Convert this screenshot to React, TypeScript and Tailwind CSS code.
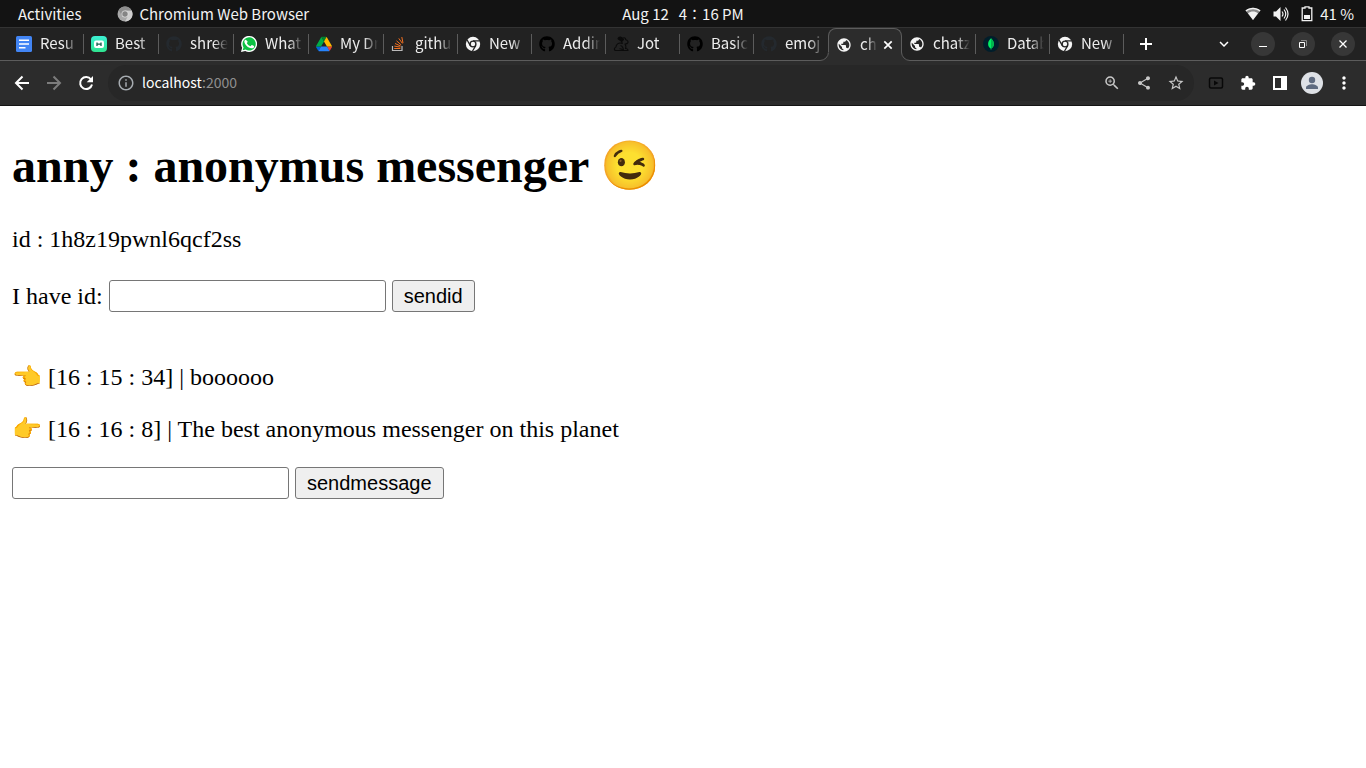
import type { ReactNode } from "react";
import { FaGithub } from "react-icons/fa";
import {
  MdExpandMore,
  MdExtension,
  MdInfoOutline,
  MdMoreVert,
  MdPublic,
  MdRefresh,
  MdShare,
  MdStarBorder,
  MdZoomIn,
} from "react-icons/md";

function DocsIcon() {
  return (
    <svg viewBox="0 0 16 16" className="size-4">
      <rect width="16" height="16" rx="1.5" fill="#4285f4" />
      <path d="M3 4.2h10M3 8h10M3 11.8h6.5" stroke="#fff" strokeWidth="1.6" />
    </svg>
  );
}

function CaptureIcon() {
  return (
    <svg viewBox="0 0 16 16" className="size-4">
      <defs>
        <linearGradient id="capture" x1="0" y1="0" x2="0" y2="1">
          <stop offset="0" stopColor="#3df0d4" />
          <stop offset="1" stopColor="#2fe38f" />
        </linearGradient>
      </defs>
      <rect width="16" height="16" rx="4" fill="url(#capture)" />
      <rect x="3" y="4.500" width="10" height="7.500" rx="2" fill="#fff" />
      <path d="M6 6.500v3.500M10 6.500v3.500M6 8.200h4" stroke="#155e4c" strokeWidth="1.300" />
    </svg>
  );
}

function WhatsAppIcon() {
  return (
    <svg viewBox="0 0 24 24" className="size-4">
      <path d="M0 24l1.7-6.2A12 12 0 1 1 6.3 22.4z" fill="#fff" />
      <path d="M2.5 21.5l1.3-4.4A9.9 9.9 0 1 1 7 20.3z" fill="#0cc143" />
      <path
        d="M8.8 6.6c-.3-.6-.6-.6-1-.6-1 .1-2 1.300-2 2.900 0 1.700 1.300 3.400 1.500 3.600.2.2 2.500 4 6.200 5.400 3 1.200 3.700.9 4.300.9.700-.1 2.100-.9 2.400-1.700.3-.8.3-1.600.2-1.700-.1-.2-.3-.3-.7-.5l-2.400-1.100c-.3-.1-.6-.2-.8.2l-1.100 1.400c-.2.200-.4.300-.8.100-.4-.2-1.500-.6-2.900-1.800-1.100-1-1.800-2.100-2-2.500-.2-.4 0-.6.2-.7.400-.4 1-1.200 1-1.500z"
        fill="#fff"
        transform="translate(-.8 -.3)"
      />
    </svg>
  );
}

function DriveIcon() {
  return (
    <svg viewBox="0 0 87.3 78" className="size-4">
      <path d="m6.600 66.850 3.850 6.650c.8 1.400 1.950 2.500 3.300 3.300L27.500 53H0c0 1.550.4 3.100 1.200 4.500z" fill="#0066da" />
      <path d="M43.650 25 29.900 1.200c-1.350.8-2.500 1.900-3.300 3.300l-25.400 44A9.060 9.060 0 0 0 0 53h27.500z" fill="#00ac47" />
      <path d="M73.550 76.800c1.350-.8 2.500-1.900 3.300-3.300l1.600-2.750L86.100 57.500c.8-1.400 1.200-2.950 1.200-4.500H59.800l5.850 11.500z" fill="#ea4335" />
      <path d="M43.650 25 57.400 1.200C56.050.4 54.500 0 52.900 0H34.400c-1.600 0-3.150.45-4.500 1.200z" fill="#00832d" />
      <path d="M59.800 53H27.500L13.750 76.800c1.350.8 2.900 1.200 4.500 1.200h50.800c1.600 0 3.150-.45 4.500-1.200z" fill="#2684fc" />
      <path d="m73.400 26.500-12.700-22c-.8-1.400-1.950-2.500-3.300-3.300L43.650 25l16.150 28h27.450c0-1.550-.4-3.100-1.200-4.500z" fill="#ffba00" />
    </svg>
  );
}

function StackOverflowIcon() {
  return (
    <svg viewBox="0 0 16 16" className="size-4" fill="none">
      <path d="M1.500 10v4.500h9.500V10" stroke="#bcbbbb" strokeWidth="1.200" />
      <path
        d="M3.200 12.500h6.200M3.300 10.100l6.100 1M4 7.500l5.700 2.500M5.500 4.800l4.700 4.100M7.800 2.400l3.600 5M10.800 1l1.200 6.100"
        stroke="#f4701f"
        strokeWidth="1"
      />
    </svg>
  );
}

function ChromeIcon() {
  return (
    <svg viewBox="0 0 16 16" className="size-4">
      <circle cx="8" cy="8" r="7.200" fill="#f5f5f5" />
      <circle cx="8" cy="8" r="3.600" fill="#222" />
      <path d="M8 4.900h6.800M5.300 9.600 2 3.800M10.700 9.600l-3.400 5.900" stroke="#222" strokeWidth="1.300" />
      <circle cx="8" cy="8" r="2.200" fill="#f5f5f5" />
    </svg>
  );
}

function RabbitIcon() {
  return (
    <svg viewBox="0 0 16 16" className="size-4" fill="none" stroke="#0b0b0b" strokeWidth="1.100" strokeLinejoin="round">
      <path d="M5 2.500C6 .5 8.500.5 10.500 3.500L8.500 5.500C7 3.800 5.500 3.500 5 2.500z" fill="#0b0b0b" />
      <path d="M10 2c1.500-.8 2.500 0 2.800 1.800 1.700.5 2.500 1.700 2.200 2.700-.5 1.300-1.500 1.500-3 1.500L13 10.500" />
      <path d="M9 5.500c-.3 1 0 1.500.3 2C6 6 3 8 2.800 11.500M2.800 11.500c-2 .3-2 3 .2 3h6.500c0-1.500-1.300-1.800-3-1.800M7.500 9.500c1.800.5 2.800 2 3 5H15c0-1.500-1-2-2.500-2l.5-2" />
    </svg>
  );
}

function GlobeIcon() {
  return <MdPublic className="size-4 text-[#f5f5f5]" />;
}

function MongoIcon() {
  return (
    <svg viewBox="0 0 16 16" className="size-4">
      <circle cx="8" cy="8" r="8" fill="#001e2b" />
      <path d="M8 2.300c2 2 2.900 3.700 2.900 5.700S9.800 11.500 8.300 12.500v1.200h-.6v-1.200C6.200 11.500 5.100 10 5.100 8S6 4.300 8 2.300z" fill="#00ed64" />
      <path d="M8 2.300c2 2 2.900 3.700 2.900 5.700S9.800 11.500 8 12.500z" fill="#00b54e" />
    </svg>
  );
}

function Github({ dim = false }: { dim?: boolean }) {
  return <FaGithub className={dim ? "size-4 text-[#24292e]" : "size-4 text-black"} />;
}

type Tab = { title: string; icon: ReactNode; active?: boolean };

const tabs: Tab[] = [
  { title: "Resu", icon: <DocsIcon /> },
  { title: "Best", icon: <CaptureIcon /> },
  { title: "shree", icon: <Github dim /> },
  { title: "What", icon: <WhatsAppIcon /> },
  { title: "My Dr", icon: <DriveIcon /> },
  { title: "githu", icon: <StackOverflowIcon /> },
  { title: "New", icon: <ChromeIcon /> },
  { title: "Addin", icon: <Github /> },
  { title: "Jot", icon: <RabbitIcon /> },
  { title: "Basic", icon: <Github /> },
  { title: "emoj", icon: <Github dim /> },
  { title: "ch", icon: <GlobeIcon />, active: true },
  { title: "chatz", icon: <GlobeIcon /> },
  { title: "Datab", icon: <MongoIcon /> },
  { title: "New", icon: <ChromeIcon /> },
];

function TabTitle({ children }: { children: ReactNode }) {
  return (
    <span className="min-w-0 flex-1 whitespace-nowrap pb-0.5 text-left [mask-image:linear-gradient(to_right,black_calc(100%-14px),transparent)]">
      {children}
    </span>
  );
}

function SystemBar() {
  return (
    <header className="grid h-[27px] grid-cols-[1fr_auto_1fr] items-center bg-[#131313] pt-px text-[15px] leading-6 text-[#f2f2f2]">
      <div className="flex items-center pl-[18px]">
        <button type="button">Activities</button>
        <button type="button" className="ml-9 flex items-center gap-[6px]">
          <svg viewBox="0 0 16 16" className="size-4">
            <circle cx="8" cy="8" r="7.500" fill="#a8a8a8" />
            <path d="M8 4.500h6.700A7.500 7.500 0 0 1 8 15.500l3-5.500z" fill="#cfcfcf" />
            <path d="M8 .5a7.500 7.500 0 0 1 6.700 4H8L5 10 1.700 4A7.500 7.500 0 0 1 8 .5z" fill="#8d8d8d" />
            <circle cx="8" cy="8" r="3.500" fill="#ddd" />
            <circle cx="8" cy="8" r="2.700" fill="#858585" />
          </svg>
          Chromium Web Browser
        </button>
      </div>
      <button type="button" className="flex gap-[10px]">
        <span>Aug 12</span>
        <span>4∶16 PM</span>
      </button>
      <div className="flex items-center justify-end pr-3">
        <svg viewBox="0 0 16 16" className="mr-3 size-4" fill="#f2f2f2">
          <path d="M.5 4.500C5 .8 11 .8 15.500 4.500L8 14z" fill="#8a8a8a" />
          <path d="M.5 4.500C5 .8 11 .8 15.500 4.500l-.8 1C10.500 2.500 5.500 2.500 1.300 5.500zM3 7.200c3-2.400 7-2.400 10 0L8 14z" />
        </svg>
        <svg viewBox="0 0 16 16" className="mr-3 size-4" fill="none" stroke="#f2f2f2">
          <path d="M.5 5.500H3L7.500 1v14L3 10.500H.5z" fill="#f2f2f2" stroke="none" />
          <path d="M9 5.500q2 2.500 0 5M11 3.500q3.500 4.500 0 9M12.500 1.500q5 6.500 0 13" strokeWidth="1.200" />
        </svg>
        <svg viewBox="0 0 12 16" className="mr-[7px] h-4 w-3" fill="none">
          <path d="M4 2V.8h4V2h2.800v12.700H1.200V2z" stroke="#f2f2f2" strokeWidth="1.300" />
          <path d="M3 9h6v4H3z" fill="#f2f2f2" />
        </svg>
        <span>41 %</span>
      </div>
    </header>
  );
}

function TabStrip() {
  return (
    <div className="flex h-[34px] items-stretch border-t border-[#333] bg-[#222]">
      <div className="w-[9px] border-b border-[#5c5c5c]" />
      <div className="grid w-[1115px] grid-cols-[repeat(5,75fr)_repeat(10,74fr)] text-[15px] text-[#ececec]">
        {tabs.map((tab, i) =>
          tab.active ? (
            <div
              key={i}
              className="relative z-10 flex min-w-0 items-center rounded-t-lg border border-b-0 border-[#5c5c5c] bg-[#2c2c2c] px-[7px]"
            >
              <svg viewBox="0 0 9 9" className="absolute -left-[9px] bottom-0 size-[9px]">
                <path d="M0 9V8.500A8.500 8.500 0 0 0 8.500 0H9v9z" fill="#2c2c2c" />
                <path d="M0 8.500A8.500 8.500 0 0 0 8.500 0" fill="none" stroke="#5c5c5c" />
                <path d="M8 0h1v1z" fill="#2c2c2c" />
              </svg>
              <svg viewBox="0 0 9 9" className="absolute -right-[9px] bottom-0 size-[9px]">
                <path d="M9 9V8.500A8.500 8.500 0 0 1 .5 0H0v9z" fill="#2c2c2c" />
                <path d="M9 8.500A8.500 8.500 0 0 1 .5 0" fill="none" stroke="#5c5c5c" />
              </svg>
              <span className="shrink-0">{tab.icon}</span>
              <span className="ml-2 flex-1 whitespace-nowrap pb-0.5 [mask-image:linear-gradient(to_right,black_calc(100%-10px),transparent)]">
                {tab.title}
              </span>
              <button type="button" aria-label="Close tab" className="ml-1">
                <svg viewBox="0 0 14 14" className="size-[14px]" stroke="#fff" strokeWidth="1.700">
                  <path d="m3.300 3.300 7.400 7.400m0-7.400-7.400 7.400" />
                </svg>
              </button>
            </div>
          ) : (
            <button
              type="button"
              key={i}
              className="flex min-w-0 items-center border-b border-[#5c5c5c] pl-[7px]"
            >
              <span className="shrink-0">{tab.icon}</span>
              <span className="ml-2 flex min-w-0 flex-1 pr-[5px]">
                <TabTitle>{tab.title}</TabTitle>
              </span>
              {!tabs[i + 1]?.active && <span className="h-5 w-px bg-[#5c5c5c]" />}
            </button>
          ),
        )}
      </div>
      <div className="flex flex-1 items-center border-b border-[#5c5c5c] pl-3 pr-[11px] text-white">
        <button type="button" aria-label="New tab">
          <svg viewBox="0 0 20 20" className="size-5" stroke="#fff" strokeWidth="2">
            <path d="M4 10h12M10 4v12" />
          </svg>
        </button>
        <button type="button" aria-label="Search tabs" className="ml-auto mr-[18px]">
          <MdExpandMore className="size-[18px]" />
        </button>
        <div className="flex gap-4">
          <button type="button" aria-label="Minimize" className="flex size-6 items-center justify-center rounded-full bg-[#373737]">
            <svg viewBox="0 0 10 10" className="size-[10px]" stroke="#fff">
              <path d="M1 7.500h8" />
            </svg>
          </button>
          <button type="button" aria-label="Restore" className="flex size-6 items-center justify-center rounded-full bg-[#373737]">
            <svg viewBox="0 0 10 10" className="size-[10px]" fill="none">
              <path d="M3 1.500h5.500V7" stroke="#8a8a8a" />
              <path d="M1.500 3.500h5v5h-5z" stroke="#fff" />
            </svg>
          </button>
          <button type="button" aria-label="Close" className="flex size-6 items-center justify-center rounded-full bg-[#373737]">
            <svg viewBox="0 0 10 10" className="size-[10px]" stroke="#fff" strokeWidth="1.300">
              <path d="m1.500 1.500 7 7m0-7-7 7" />
            </svg>
          </button>
        </div>
      </div>
    </div>
  );
}

function Toolbar() {
  return (
    <div className="flex h-[45px] items-center border-b border-[#141414] bg-[#2c2c2c] px-3">
      <div className="flex gap-3 text-white">
        <button type="button" aria-label="Back">
          <svg viewBox="0 0 20 20" className="size-5" fill="none" stroke="#fff" strokeWidth="2">
            <path d="M17 10H4.500M10.500 3.500 4 10l6.500 6.500" />
          </svg>
        </button>
        <button type="button" aria-label="Forward">
          <svg viewBox="0 0 20 20" className="size-5" fill="none" stroke="#7c7c7c" strokeWidth="2">
            <path d="M3 10h12.500M9.500 3.500 16 10l-6.500 6.500" />
          </svg>
        </button>
        <button type="button" aria-label="Reload">
          <svg viewBox="0 0 20 20" className="size-5" fill="none">
            <path d="M15 6.500A6 6 0 1 0 16 11.500" stroke="#fff" strokeWidth="2" />
            <path d="M17 3v6.300h-6.300z" fill="#fff" />
          </svg>
        </button>
      </div>
      <div className="ml-3 flex h-9 flex-1 items-center rounded-full bg-[#272727] pl-[9px] pr-[9px] text-[#c8c8c8]">
        <MdInfoOutline className="size-[18px] text-[#a6abb0]" />
        <span className="ml-[7px] pb-0.5 text-[14px] text-[#8f8f8f]">
          <span className="text-white">localhost</span>:2000
        </span>
        <div className="ml-auto flex gap-[14px]">
          <button type="button" aria-label="Zoom">
            <MdZoomIn className="size-[18px]" />
          </button>
          <button type="button" aria-label="Share">
            <MdShare className="size-[18px] p-px" />
          </button>
          <button type="button" aria-label="Bookmark">
            <MdStarBorder className="size-[18px]" />
          </button>
        </div>
      </div>
      <div className="ml-[14px] flex items-center text-white">
        <button type="button" aria-label="Video extension">
          <svg viewBox="0 0 16 16" className="size-4">
            <rect x="1.500" y="3" width="13" height="10" rx="1.500" fill="none" stroke="#080808" strokeWidth="1.500" />
            <path d="M6 5.500 10.500 8 6 10.500z" fill="#080808" />
          </svg>
        </button>
        <button type="button" aria-label="Extensions" className="ml-4">
          <MdExtension className="size-4" />
        </button>
        <button type="button" aria-label="Side panel" className="ml-4">
          <svg viewBox="0 0 16 16" className="size-4">
            <path fillRule="evenodd" d="M1 1h14v14H1zM3 3v10h6V3z" fill="#fff" />
          </svg>
        </button>
        <button type="button" aria-label="Profile" className="ml-3">
          <svg viewBox="0 0 24 24" className="size-6">
            <circle cx="12" cy="12" r="11" fill="#dee1e6" />
            <circle cx="12" cy="9" r="3.200" fill="#5f6b80" />
            <path d="M6 18v-1.500c0-2 3.500-3.300 6-3.300s6 1.300 6 3.300V18z" fill="#5f6b80" />
          </svg>
        </button>
        <button type="button" aria-label="Menu" className="ml-[10px]">
          <MdMoreVert className="size-5" />
        </button>
      </div>
    </div>
  );
}

const inputStyle = "h-8 w-[277px] rounded-[3px] border border-[#767676] bg-white px-[3px] text-xl";
const buttonStyle =
  "h-8 rounded-[3px] border border-[#767676] bg-[#efefef] px-[11px] font-['Liberation_Sans',sans-serif] text-xl leading-7";

export default function App() {
  return (
    <div className="min-h-screen bg-white">
      <div className="font-['Noto_Sans_CJK_JP',sans-serif]">
        <SystemBar />
        <TabStrip />
        <Toolbar />
      </div>
      <main className="px-3 pt-8 font-['Liberation_Serif','Noto_Color_Emoji',serif] text-2xl leading-7 text-black">
        <h1 className="text-5xl font-bold leading-[56px]">anny : anonymus messenger 😉</h1>
        <p className="mt-[31px]">id : 1h8z19pwnl6qcf2ss</p>
        <form className="mt-[27px] flex items-center gap-[6px]">
          <label htmlFor="peer">I have id:</label>
          <input id="peer" type="text" className={inputStyle} />
          <button type="button" className={buttonStyle}>
            sendid
          </button>
        </form>
        <p className="mt-[51px]">👈 [16 : 15 : 34] | boooooo</p>
        <p className="mt-6">👉 [16 : 16 : 8] | The best anonymous messenger on this planet</p>
        <form className="mt-6 flex items-center gap-[6px]">
          <input type="text" aria-label="Message" className={inputStyle} />
          <button type="button" className={buttonStyle}>
            sendmessage
          </button>
        </form>
      </main>
    </div>
  );
}
